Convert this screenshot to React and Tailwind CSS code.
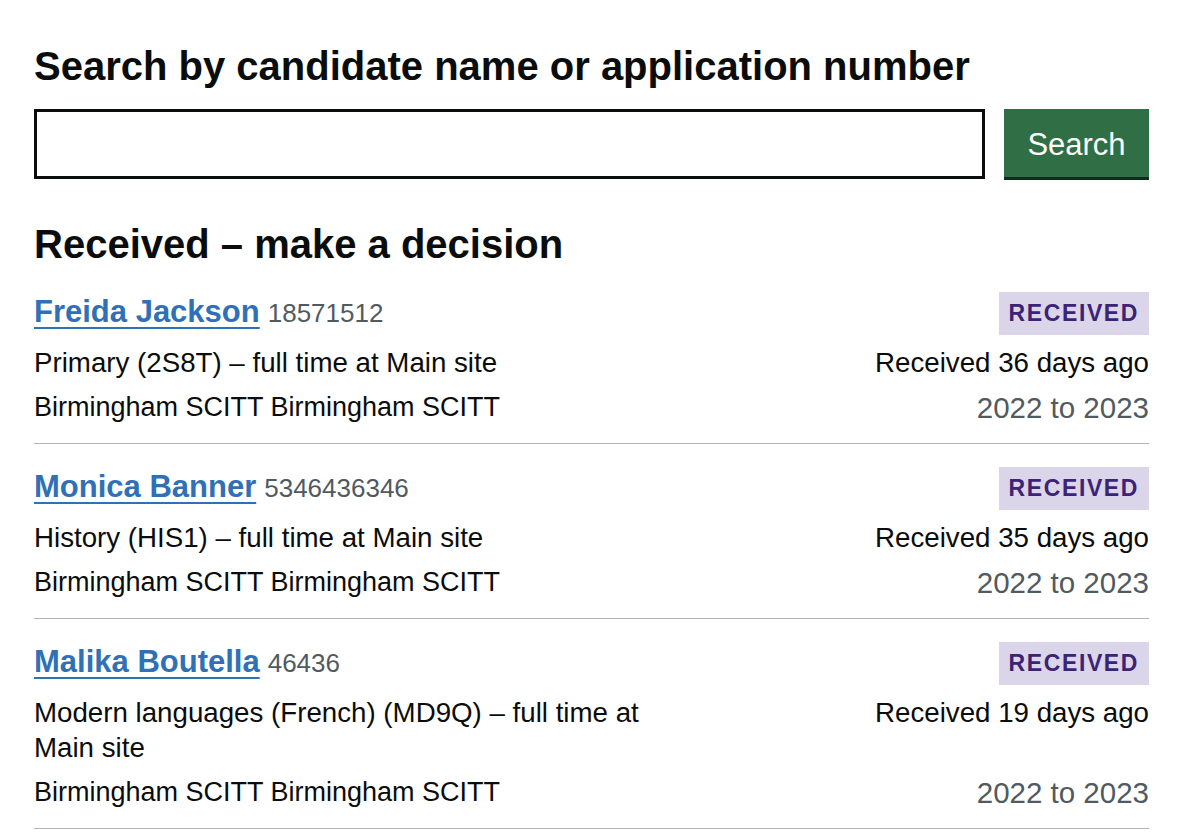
const applications = [
  {
    name: "Freida Jackson",
    number: "18571512",
    course: "Primary (2S8T) – full time at Main site",
    provider: "Birmingham SCITT Birmingham SCITT",
    received: "Received 36 days ago",
    cycle: "2022 to 2023",
  },
  {
    name: "Monica Banner",
    number: "5346436346",
    course: "History (HIS1) – full time at Main site",
    provider: "Birmingham SCITT Birmingham SCITT",
    received: "Received 35 days ago",
    cycle: "2022 to 2023",
  },
  {
    name: "Malika Boutella",
    number: "46436",
    course: "Modern languages (French) (MD9Q) – full time at Main site",
    provider: "Birmingham SCITT Birmingham SCITT",
    received: "Received 19 days ago",
    cycle: "2022 to 2023",
  },
];

function ApplicationRow({ app }) {
  return (
    <div className="border-b border-[#b1b4b6] pt-[23px] pb-[18px]">
      <div className="flex h-[43px] items-center justify-between">
        <p className="leading-[43px]">
          <a
            href="#"
            className="text-[31px] font-bold text-[#2f70b6] underline decoration-2 underline-offset-[5px]"
          >
            {app.name}
          </a>
          <span className="ml-[8px] text-[26px] text-[#505a5f]">{app.number}</span>
        </p>
        <span className="bg-[#dbd5e9] px-[10px] text-[23px] leading-[43px] font-bold tracking-[1.6px] text-[#3d2375]">
          RECEIVED
        </span>
      </div>

      <div className="mt-[10px] grid grid-cols-[640px_1fr] gap-y-[10px] text-[27.7px] leading-[35px]">
        <p>{app.course}</p>
        <p className="text-right">{app.received}</p>
        <p className="text-[27px]">{app.provider}</p>
        <p className="self-end text-right text-[29.5px] text-[#505a5f]">{app.cycle}</p>
      </div>
    </div>
  );
}

export default function App() {
  return (
    <div className="min-h-[832px] bg-white pt-[44px] pr-[37px] pl-[34px] font-['Liberation_Sans',Arial,sans-serif] text-[#0b0c0c]">
      <h1 className="text-[40px] leading-[44px] font-bold">
        Search by candidate name or application number
      </h1>

      <div className="mt-[21px] flex gap-[19px]">
        <input
          type="text"
          className="h-[70px] flex-1 border-[3px] border-[#0b0c0c] px-3 text-[28px] outline-none"
        />
        <button className="h-[68px] w-[145px] pt-[4px] bg-[#306e45] text-[31px] text-white shadow-[0_3px_0_#122c1b]">
          Search
        </button>
      </div>

      <h2 className="mt-[43px] text-[40px] leading-[44px] font-bold">
        Received – make a decision
      </h2>

      <div className="mt-[3px]">
        {applications.map((app) => (
          <ApplicationRow key={app.number} app={app} />
        ))}
      </div>
    </div>
  );
}
